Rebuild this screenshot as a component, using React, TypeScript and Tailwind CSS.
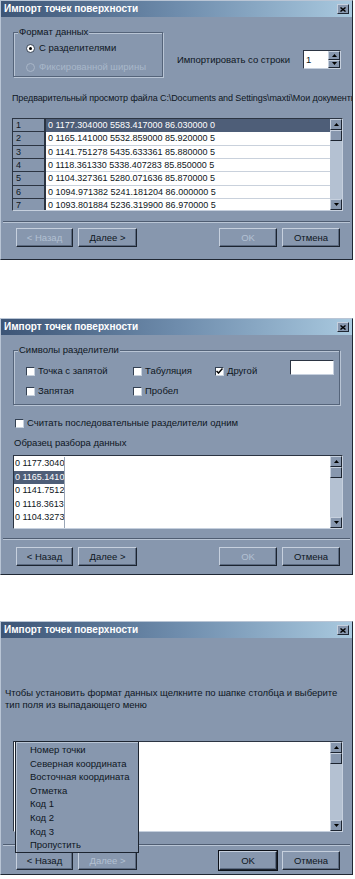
import React from "react";

const rows = [
  "0 1177.304000 5583.417000 86.030000 0",
  "0 1165.141000 5532.859000 85.920000 5",
  "0 1141.751278 5435.633361 85.880000 5",
  "0 1118.361330 5338.407283 85.850000 5",
  "0 1104.327361 5280.071636 85.870000 5",
  "0 1094.971382 5241.181204 86.000000 5",
  "0 1093.801884 5236.319900 86.970000 5",
];

const sample = ["0 1177.3040", "0 1165.1410", "0 1141.7512", "0 1118.3613", "0 1104.3273", "0 1094.9713"];

const menuItems = [
  "Номер точки",
  "Северная координата",
  "Восточная координата",
  "Отметка",
  "Код 1",
  "Код 2",
  "Код 3",
  "Пропустить",
];

function TitleBar() {
  return (
    <div className="h-[16px] flex items-center justify-between pl-[3px] pr-[3px] bg-linear-to-r from-[#3d5576] via-[#6e8cac] to-[#a9c9df]">
      <span className="text-[10px] font-bold text-white leading-none">Импорт точек поверхности</span>
      <div className="w-[12px] h-[10px] bg-[#8797ae] border border-t-[#c6d0de] border-l-[#c6d0de] border-r-[#1f2733] border-b-[#1f2733] flex items-center justify-center">
        <svg width="6" height="5" viewBox="0 0 6 5">
          <path d="M0.5 0.5 L5.5 4.5 M5.5 0.5 L0.5 4.5" stroke="#000" strokeWidth="1.4" />
        </svg>
      </div>
    </div>
  );
}

function Dialog({ children, className = "" }: { children: React.ReactNode; className?: string }) {
  return (
    <div
      className={`relative w-[353px] bg-[#8797ae] border border-t-[#b9c5d5] border-l-[#b9c5d5] border-r-[#1f2733] border-b-[#1f2733] flex flex-col overflow-hidden ${className}`}
    >
      <TitleBar />
      {children}
    </div>
  );
}

function Btn({ label, disabled, isDefault, w }: { label: string; disabled?: boolean; isDefault?: boolean; w: string }) {
  return (
    <div
      className={`${w} h-[19px] flex items-center justify-center bg-[#8797ae] border border-t-[#c6d0de] border-l-[#c6d0de] border-r-[#1c2430] border-b-[#1c2430] shadow-[inset_-1px_-1px_0_#5b6a80] ${
        disabled ? "text-[#b3c1d3]" : "text-[#0e1622]"
      } ${isDefault ? "outline outline-1 outline-[#0c1018]" : ""}`}
    >
      {label}
    </div>
  );
}

function Buttons({ back, next, ok, okDefault }: { back?: boolean; next?: boolean; ok?: boolean; okDefault?: boolean }) {
  return (
    <div className="flex pl-[15px] pr-[12px]">
      <Btn w="w-[57px]" label="< Назад" disabled={!back} />
      <div className="ml-[5px]">
        <Btn w="w-[59px]" label="Далее >" disabled={!next} />
      </div>
      <div className="flex-1" />
      <Btn w="w-[58px]" label="OK" disabled={!ok} isDefault={okDefault} />
      <div className="ml-[5px]">
        <Btn w="w-[58px]" label="Отмена" />
      </div>
    </div>
  );
}

function Separator({ className = "" }: { className?: string }) {
  return <div className={`mx-[2px] h-[2px] border-t border-t-[#4f5d72] border-b border-b-[#b9c5d5] ${className}`} />;
}

function Arrow({ up }: { up?: boolean }) {
  return (
    <svg width="5" height="3" viewBox="0 0 5 3">
      <path d={up ? "M2.5 0 L5 3 L0 3 Z" : "M0 0 L5 0 L2.5 3 Z"} fill="#000" />
    </svg>
  );
}

function ScrollBtn({ up }: { up?: boolean }) {
  return (
    <div className="h-[11px] bg-[#8797ae] border border-t-[#c6d0de] border-l-[#c6d0de] border-r-[#1c2430] border-b-[#1c2430] flex items-center justify-center">
      <Arrow up={up} />
    </div>
  );
}

function ScrollBar() {
  return (
    <div className="w-[12px] h-full flex flex-col bg-[#b4c1d2]">
      <ScrollBtn up />
      <div className="h-[11px] bg-[#8797ae] border border-t-[#c6d0de] border-l-[#c6d0de] border-r-[#1c2430] border-b-[#1c2430]" />
      <div className="flex-1" />
      <ScrollBtn />
    </div>
  );
}

function Radio({ label, checked, disabled }: { label: string; checked?: boolean; disabled?: boolean }) {
  return (
    <div className="flex items-center h-[12px] gap-[4px]">
      <div
        className={`w-[9px] h-[9px] rounded-full border flex items-center justify-center ${
          disabled ? "bg-[#8797ae] border-[#a9b6c8]" : "bg-white border-[#334052]"
        }`}
      >
        {checked && <div className="w-[3px] h-[3px] rounded-full bg-black" />}
      </div>
      <span className={disabled ? "text-[#a9b7ca]" : ""}>{label}</span>
    </div>
  );
}

function Check({ label, checked, w }: { label: string; checked?: boolean; w?: string }) {
  return (
    <div className={`flex items-center h-[12px] gap-[3px] ${w ?? ""}`}>
      <div className="w-[9px] h-[9px] bg-white border border-t-[#334052] border-l-[#334052] border-b-[#c8d2de] border-r-[#c8d2de] flex items-center justify-center">
        {checked && (
          <svg width="7" height="6" viewBox="0 0 7 6">
            <path d="M0.5 3 L2.5 5 L6.5 0.5" stroke="#000" strokeWidth="1.5" fill="none" />
          </svg>
        )}
      </div>
      <span>{label}</span>
    </div>
  );
}

function GroupBox({ label, className, children }: { label: string; className: string; children: React.ReactNode }) {
  return (
    <div className={`relative border border-[#55647a] shadow-[inset_1px_1px_0_#b9c5d5,1px_1px_0_#b9c5d5] ${className}`}>
      <span className="absolute -top-[7px] left-[4px] bg-[#8797ae] px-[1px] leading-[12px]">{label}</span>
      {children}
    </div>
  );
}

export default function App() {
  return (
    <div className="w-[355px] h-[879px] bg-white overflow-hidden font-['Liberation_Sans',Arial,sans-serif] text-[9.5px] leading-[12px] text-[#0e1622]">
      {/* step 1 */}
      <Dialog className="h-[260px]">
        <div className="flex mt-[15px] ml-[12px] h-[45px]">
          <GroupBox label="Формат данных" className="w-[150px] h-[45px]">
            <div className="flex flex-col pl-[12px] pt-[9px] gap-[7px]">
              <Radio checked label="С разделителями" />
              <Radio disabled label="Фиксированной ширины" />
            </div>
          </GroupBox>
          <div className="flex items-center ml-[14px] mt-[18px] h-[19px]">
            <span className="w-[126px]">Импортировать со строки</span>
            <div className="w-[38px] h-[19px] flex bg-white border border-t-[#2b3442] border-l-[#2b3442] border-b-[#c6d0de] border-r-[#c6d0de]">
              <span className="flex-1 pl-[2px] leading-[17px]">1</span>
              <div className="w-[12px] flex flex-col">
                <div className="flex-1 bg-[#8797ae] border border-t-[#c6d0de] border-l-[#c6d0de] border-r-[#1c2430] border-b-[#1c2430] flex items-center justify-center">
                  <Arrow up />
                </div>
                <div className="flex-1 bg-[#8797ae] border border-t-[#c6d0de] border-l-[#c6d0de] border-r-[#1c2430] border-b-[#1c2430] flex items-center justify-center">
                  <Arrow />
                </div>
              </div>
            </div>
          </div>
        </div>
        <div className="mt-[15px] ml-[11px] whitespace-nowrap overflow-hidden text-[9px] tracking-[-0.1px]">
          Предварительный просмотр файла C:\Documents and Settings\maxti\Мои документы
        </div>
        <div className="mt-[14px] ml-[11px] w-[331px] h-[93px] flex border border-t-[#2b3442] border-l-[#2b3442] border-b-[#c6d0de] border-r-[#c6d0de] overflow-hidden">
          <div className="flex-1 flex flex-col overflow-hidden">
            {rows.map((r, i) => (
              <div key={i} className="flex h-[13.33px] shrink-0 text-[9px] leading-[12px]">
                <div className="w-[33px] bg-[#8797ae] border-r-2 border-b border-[#2b3442] pl-[3px]">{i + 1}</div>
                <div
                  className={`flex-1 pl-[2px] whitespace-nowrap overflow-hidden border-b ${
                    i === 0 ? "bg-[#4e5e78] text-white border-[#4e5e78]" : "bg-white border-[#c9d1dc]"
                  }`}
                >
                  {r}
                </div>
              </div>
            ))}
          </div>
          <ScrollBar />
        </div>
        <Separator className="mt-[10px]" />
        <div className="mt-[5px]">
          <Buttons next />
        </div>
      </Dialog>

      {/* step 2 */}
      <Dialog className="mt-[58px] h-[257px]">
        <GroupBox label="Символы разделители" className="mt-[15px] ml-[12px] w-[327px] h-[55px]">
          <div className="flex items-start pt-[9px] pl-[12px]">
            <div className="mt-[5px] flex">
              <Check w="w-[107px]" label="Точка с запятой" />
              <Check w="w-[82px]" label="Табуляция" />
              <Check w="w-[75px]" checked label="Другой" />
            </div>
            <div className="w-[44px] h-[15px] bg-white border border-t-[#2b3442] border-l-[#2b3442] border-b-[#c6d0de] border-r-[#c6d0de]" />
          </div>
          <div className="flex mt-[8px] pl-[12px]">
            <Check w="w-[107px]" label="Запятая" />
            <Check label="Пробел" />
          </div>
        </GroupBox>
        <div className="mt-[12px] ml-[14px]">
          <Check label="Считать последовательные разделители одним" />
        </div>
        <div className="mt-[8px] ml-[13px]">Образец разбора данных</div>
        <div className="mt-[6px] ml-[12px] w-[330px] h-[74px] flex bg-white border border-t-[#2b3442] border-l-[#2b3442] border-b-[#c6d0de] border-r-[#c6d0de] overflow-hidden">
          <div className="flex-1 flex flex-col overflow-hidden pt-px">
            {sample.map((s, i) => (
              <div key={i} className="h-[13.5px] shrink-0 flex text-[9px] leading-[13px]">
                <div
                  className={`w-[51px] pl-[1px] whitespace-nowrap overflow-hidden border-r border-[#9aa6b6] ${
                    i === 1 ? "bg-[#4e5e78] text-white" : ""
                  }`}
                >
                  {s}
                </div>
              </div>
            ))}
          </div>
          <ScrollBar />
        </div>
        <Separator className="mt-[9px]" />
        <div className="mt-[7px]">
          <Buttons back next />
        </div>
      </Dialog>

      {/* step 3 */}
      <Dialog className="mt-[46px] h-[254px]">
        <div className="mt-[49px] ml-[4px]">
          <div>Чтобы установить формат данных щелкните по шапке столбца и выберите</div>
          <div>тип поля из выпадающего меню</div>
        </div>
        <div className="relative mt-[30px] ml-[12px] w-[330px] h-[91px]">
          <div className="w-full h-full flex bg-white border border-t-[#2b3442] border-l-[#2b3442] border-b-[#c6d0de] border-r-[#c6d0de]">
            <div className="flex-1" />
            <ScrollBar />
          </div>
          <div className="absolute left-[2px] top-0 w-[124px] h-[112px] bg-[#8797ae] border border-[#1c2430] shadow-[inset_1px_1px_0_#b9c5d5] pt-[1px] z-10">
            {menuItems.map((m) => (
              <div key={m} className="h-[13.6px] leading-[13.6px] pl-[14px]">
                {m}
              </div>
            ))}
          </div>
        </div>
        <Separator className="mt-[12px]" />
        <div className="mt-[5px]">
          <Buttons back ok okDefault />
        </div>
      </Dialog>
    </div>
  );
}
